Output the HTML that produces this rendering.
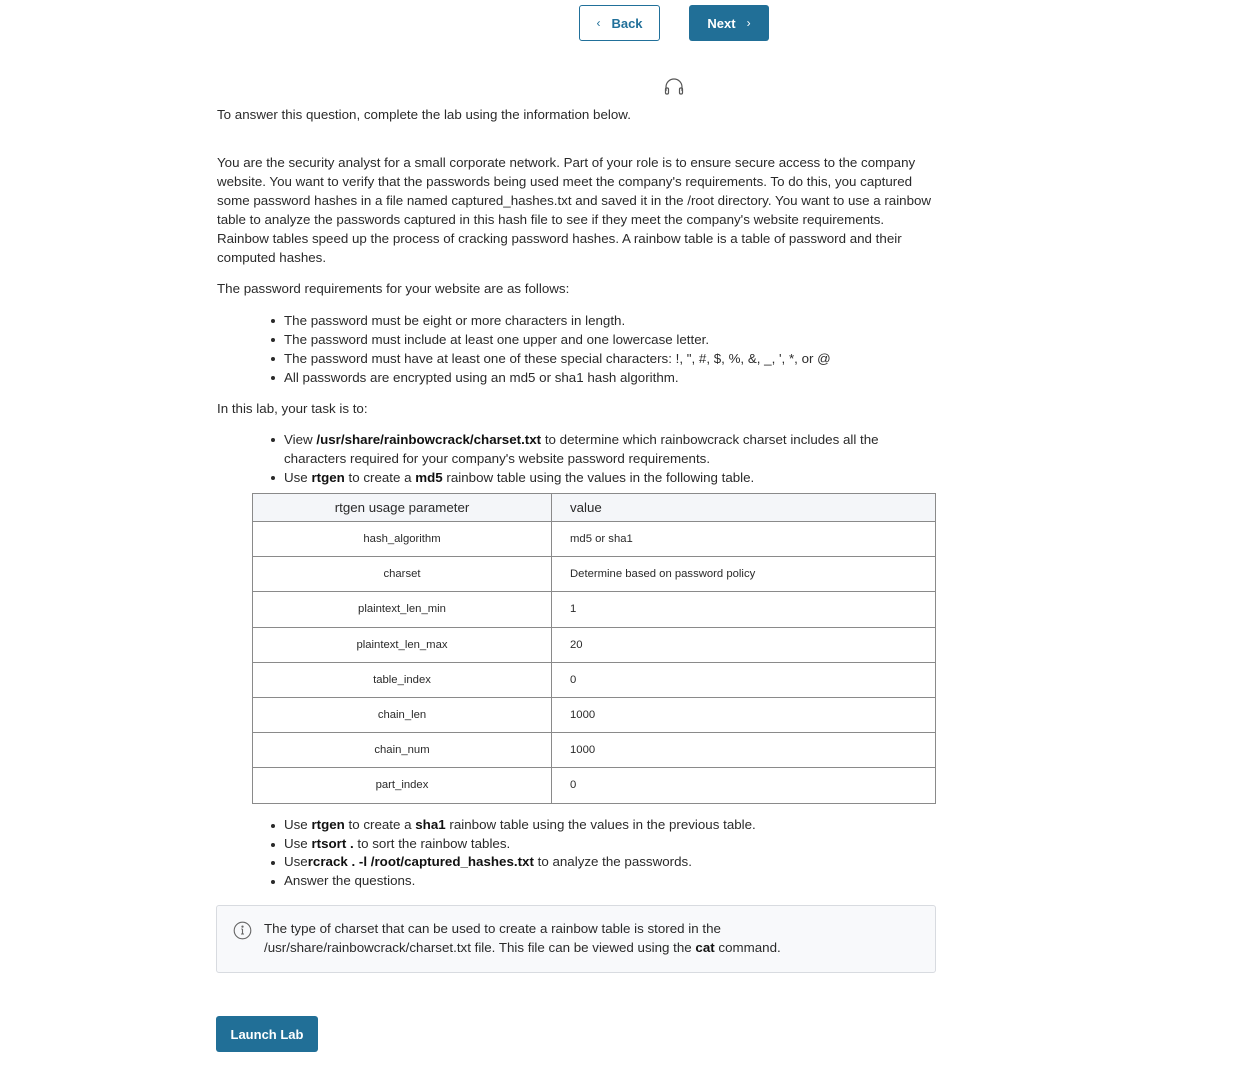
<!DOCTYPE html>
<html><head><meta charset="utf-8"><style>
*{margin:0;padding:0;box-sizing:border-box}
body{width:1256px;height:1082px;background:#fff;font-family:"Liberation Sans",sans-serif;color:#2a2a2a;font-size:13.35px;position:relative;overflow:hidden}
.a{position:absolute;white-space:nowrap;line-height:19px}
.btn{position:absolute;height:36px;border-radius:3px;font-weight:bold;font-size:13px;display:flex;align-items:center;justify-content:center}
ul{list-style:none}
ul li{position:relative;padding-left:0}
ul li:before{content:"";position:absolute;left:-13px;top:8px;width:4px;height:4px;border-radius:50%;background:#2a2a2a}
table{position:absolute;left:252px;top:493px;width:684px;border-collapse:collapse;font-size:11.3px}
td,th{border:1px solid #8a8a8a;height:35.2px;font-weight:normal}
th{height:28px;background:#f4f6f9;font-size:13.3px}
td:first-child,th:first-child{width:299px;text-align:center}
td:last-child,th:last-child{text-align:left;padding-left:18px}
b{color:#111}
</style></head><body>
<div class="btn" style="left:579px;top:5px;width:81px;border:1px solid #21709a;color:#21709a"><span style="font-weight:normal;margin-right:11px;font-size:12px">&#8249;</span>Back</div>
<div class="btn" style="left:689px;top:5px;width:80px;background:#216f97;color:#fff">Next<span style="font-weight:normal;margin-left:11px;font-size:12px">&#8250;</span></div>
<svg style="position:absolute;left:664px;top:78px" width="20" height="17" viewBox="0 0 20 17" fill="none" stroke="#555" stroke-width="1.2"><path d="M2 13V9a8 8 0 0 1 16 0v4"/><rect x="1.5" y="10" width="3" height="6" rx="1.2"/><rect x="15.5" y="10" width="3" height="6" rx="1.2"/></svg>
<div class="a" style="left:217px;top:105px">To answer this question, complete the lab using the information below.</div>
<div class="a" style="left:217px;top:153px">You are the security analyst for a small corporate network. Part of your role is to ensure secure access to the company<br>website. You want to verify that the passwords being used meet the company's requirements. To do this, you captured<br>some password hashes in a file named captured_hashes.txt and saved it in the /root directory. You want to use a rainbow<br>table to analyze the passwords captured in this hash file to see if they meet the company's website requirements.<br>Rainbow tables speed up the process of cracking password hashes. A rainbow table is a table of password and their<br>computed hashes.</div>
<div class="a" style="left:217px;top:279px">The password requirements for your website are as follows:</div>
<ul class="a" style="left:284px;top:311px"><li>The password must be eight or more characters in length.</li><li>The password must include at least one upper and one lowercase letter.</li><li>The password must have at least one of these special characters: !, ", #, $, %, &amp;, _, ', *, or @</li><li>All passwords are encrypted using an md5 or sha1 hash algorithm.</li></ul>
<div class="a" style="left:217px;top:399px">In this lab, your task is to:</div>
<ul class="a" style="left:284px;top:430px"><li>View <b>/usr/share/rainbowcrack/charset.txt</b> to determine which rainbowcrack charset includes all the<br>characters required for your company's website password requirements.</li><li>Use <b>rtgen</b> to create a <b>md5</b> rainbow table using the values in the following table.</li></ul>
<table>
<tr><th>rtgen usage parameter</th><th>value</th></tr>
<tr><td>hash_algorithm</td><td>md5 or sha1</td></tr>
<tr><td>charset</td><td>Determine based on password policy</td></tr>
<tr><td>plaintext_len_min</td><td>1</td></tr>
<tr><td>plaintext_len_max</td><td>20</td></tr>
<tr><td>table_index</td><td>0</td></tr>
<tr><td>chain_len</td><td>1000</td></tr>
<tr><td>chain_num</td><td>1000</td></tr>
<tr><td>part_index</td><td>0</td></tr>
</table>
<ul class="a" style="left:284px;top:816px;line-height:18.7px"><li>Use <b>rtgen</b> to create a <b>sha1</b> rainbow table using the values in the previous table.</li><li>Use <b>rtsort .</b> to sort the rainbow tables.</li><li>Use<b>rcrack . -l /root/captured_hashes.txt</b> to analyze the passwords.</li><li>Answer the questions.</li></ul>
<div style="position:absolute;left:216px;top:905px;width:720px;height:68px;border:1px solid #d8dbe0;border-radius:3px;background:#f8f9fb"></div>
<svg style="position:absolute;left:233px;top:921px" width="19" height="19" viewBox="0 0 19 19" fill="none" stroke="#666" stroke-width="1.1"><circle cx="9.5" cy="9.5" r="8.3"/><path d="M9.5 8v5M8 13h3M8.3 8h1.2"/><circle cx="9.5" cy="5.6" r=".6" fill="#666"/></svg>
<div class="a" style="left:264px;top:919px">The type of charset that can be used to create a rainbow table is stored in the<br>/usr/share/rainbowcrack/charset.txt file. This file can be viewed using the <b>cat</b> command.</div>
<div class="btn" style="left:216px;top:1016px;width:102px;background:#216f97;color:#fff">Launch Lab</div>
</body></html>
